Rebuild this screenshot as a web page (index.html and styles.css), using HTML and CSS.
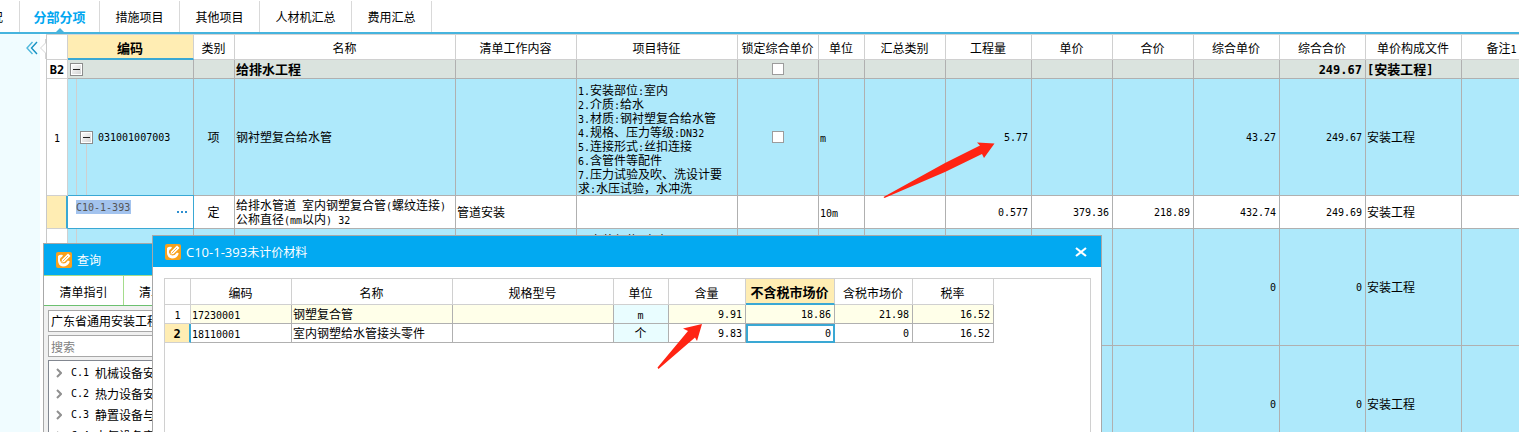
FILE: index.html
```html
<!DOCTYPE html>
<html lang="zh-CN">
<head>
    <meta charset="UTF-8">
    <meta name="viewport" content="width=device-width, initial-scale=1.0">
    <title>分部分项</title>
    <link rel="stylesheet" href="styles.css">
</head>
<body>
    <nav class="tabs">
        <a href="#" class="tab tab-cut">概况</a>
        <a href="#" class="tab active">分部分项</a>
        <a href="#" class="tab">措施项目</a>
        <a href="#" class="tab">其他项目</a>
        <a href="#" class="tab tab-wide">人材机汇总</a>
        <a href="#" class="tab">费用汇总</a>
    </nav>

    <div class="main">
        <aside class="side">
            <button class="collapse" aria-label="收起">
                <svg width="12" height="14" viewBox="0 0 12 14" fill="none" stroke-width="1.4">
                    <path d="M6.5 1 L1 7 L6.5 13" stroke="#4fb8dc"/>
                    <path d="M11 1 L5.5 7 L11 13" stroke="#1592c4"/>
                </svg>
            </button>
        </aside>
        <div class="gutter">
            <svg width="6" height="20" viewBox="0 0 6 20">
                <path d="M5.500 0 V4 L0.500 9 L5.500 14 V20" fill="#fff" stroke="#d4d4d4"/>
            </svg>
        </div>

        <div class="grid-wrap">
            <table class="grid">
                <colgroup>
                    <col class="w21"><col class="w126"><col class="w41"><col class="w221"><col class="w121">
                    <col class="w161"><col class="w81"><col class="w46"><col class="w81"><col class="w86">
                    <col class="w81"><col class="w81"><col class="w86"><col class="w86"><col class="w96"><col class="w81">
                </colgroup>
                <thead>
                    <tr>
                        <th></th>
                        <th class="current">编码</th>
                        <th>类别</th>
                        <th>名称</th>
                        <th>清单工作内容</th>
                        <th>项目特征</th>
                        <th>锁定综合单价</th>
                        <th>单位</th>
                        <th>汇总类别</th>
                        <th>工程量</th>
                        <th>单价</th>
                        <th>合价</th>
                        <th>综合单价</th>
                        <th>综合合价</th>
                        <th>单价构成文件</th>
                        <th>备注<span class="n">1</span></th>
                    </tr>
                </thead>
                <tbody>
                    <tr class="group">
                        <td class="row-no"><span class="n">B2</span></td>
                        <td class="tree"><div class="node"><button class="toggle" aria-label="折叠"></button></div></td>
                        <td></td>
                        <td>给排水工程</td>
                        <td></td>
                        <td></td>
                        <td class="mid"><input type="checkbox" aria-label="锁定综合单价"></td>
                        <td></td><td></td><td></td><td></td><td></td><td></td>
                        <td class="num">249.67</td>
                        <td><span class="n">[</span>安装工程<span class="n">]</span></td>
                        <td></td>
                    </tr>
                    <tr class="item">
                        <td class="row-no"><span class="n">1</span></td>
                        <td class="tree lines"><div class="node sub"><button class="toggle" aria-label="折叠"></button><span class="n">031001007003</span></div></td>
                        <td class="mid">项</td>
                        <td>钢衬塑复合给水管</td>
                        <td></td>
                        <td class="feature">
                            <span class="n">1.</span>安装部位<span class="n">:</span>室内<br>
                            <span class="n">2.</span>介质<span class="n">:</span>给水<br>
                            <span class="n">3.</span>材质<span class="n">:</span>钢衬塑复合给水管<br>
                            <span class="n">4.</span>规格、压力等级<span class="n">:DN32</span><br>
                            <span class="n">5.</span>连接形式<span class="n">:</span>丝扣连接<br>
                            <span class="n">6.</span>含管件等配件<br>
                            <span class="n">7.</span>压力试验及吹、洗设计要求<span class="n">:</span>水压试验，水冲洗
                        </td>
                        <td class="mid"><input type="checkbox" aria-label="锁定综合单价"></td>
                        <td><span class="n">m</span></td>
                        <td></td>
                        <td class="num">5.77</td>
                        <td></td>
                        <td></td>
                        <td class="num">43.27</td>
                        <td class="num">249.67</td>
                        <td>安装工程</td>
                        <td></td>
                    </tr>
                    <tr class="quota">
                        <td class="row-no marked"></td>
                        <td class="editing">
                            <div class="editor">
                                <input type="text" class="code-input" value="C10-1-393" aria-label="编码">
                                <button class="more" aria-label="更多"><i></i><i></i><i></i></button>
                            </div>
                        </td>
                        <td class="mid">定</td>
                        <td>给排水管道<span class="n"> </span>室内钢塑复合管<span class="n">(</span>螺纹连接<span class="n">)</span><br>公称直径<span class="n">(mm</span>以内<span class="n">) 32</span></td>
                        <td>管道安装</td>
                        <td></td>
                        <td></td>
                        <td><span class="n">10m</span></td>
                        <td></td>
                        <td class="num">0.577</td>
                        <td class="num">379.36</td>
                        <td class="num">218.89</td>
                        <td class="num">432.74</td>
                        <td class="num">249.69</td>
                        <td>安装工程</td>
                        <td></td>
                    </tr>
                    <tr class="item">
                        <td class="row-no"></td>
                        <td class="tree line"></td>
                        <td></td>
                        <td></td>
                        <td></td>
                        <td class="feature top"><span class="n">1.</span>安装部位<span class="n">:</span>室内</td>
                        <td></td><td></td><td></td><td></td><td></td><td></td>
                        <td class="num">0</td>
                        <td class="num">0</td>
                        <td>安装工程</td>
                        <td></td>
                    </tr>
                    <tr class="item">
                        <td class="row-no"></td>
                        <td class="tree line"></td>
                        <td></td><td></td><td></td><td></td><td></td><td></td><td></td><td></td><td></td><td></td>
                        <td class="num">0</td>
                        <td class="num">0</td>
                        <td>安装工程</td>
                        <td></td>
                    </tr>
                </tbody>
            </table>
        </div>
    </div>

    <!-- query window -->
    <section class="window query">
        <header class="title-bar">
            <svg class="logo" width="16" height="16" viewBox="0 0 16 16">
                <rect width="16" height="16" rx="2" fill="#f9a11b"/>
                <path d="M2 4 Q4 2 7 3 L6 5 Q3.500 6 4 8.500 Q4.500 11 7.500 11.500 Q10.500 11 12 8.500 L13.800 9.500 Q12 14.500 7 14.500 Q2.500 14 2 9 Z" fill="#fff"/>
                <path d="M5.500 10.500 L6 7.500 L12 1.500 L14.500 4 L8.500 10 Z" fill="#fff"/>
                <path d="M6.500 9.500 L12 4" stroke="#f9a11b" stroke-width="0.800"/>
            </svg>
            <span>查询</span>
        </header>
        <div class="query-tabs">
            <a href="#">清单指引</a>
            <a href="#">清单</a>
        </div>
        <div class="query-body">
            <select aria-label="定额库"><option>广东省通用安装工程</option></select>
            <input type="text" class="search" placeholder="搜索" aria-label="搜索">
            <ul class="catalog">
                <li><svg width="6" height="10" viewBox="0 0 6 10"><path d="M1 1 L5 5 L1 9"/></svg><span class="n">C.1 </span>机械设备安装工程</li>
                <li><svg width="6" height="10" viewBox="0 0 6 10"><path d="M1 1 L5 5 L1 9"/></svg><span class="n">C.2 </span>热力设备安装工程</li>
                <li><svg width="6" height="10" viewBox="0 0 6 10"><path d="M1 1 L5 5 L1 9"/></svg><span class="n">C.3 </span>静置设备与工艺</li>
                <li><svg width="6" height="10" viewBox="0 0 6 10"><path d="M1 1 L5 5 L1 9"/></svg><span class="n">C.4 </span>电气设备安装工程</li>
            </ul>
        </div>
    </section>

    <!-- unpriced material window -->
    <section class="window material">
        <header class="title-bar">
            <svg class="logo" width="16" height="16" viewBox="0 0 16 16">
                <rect width="16" height="16" rx="2" fill="#f9a11b"/>
                <path d="M2 4 Q4 2 7 3 L6 5 Q3.500 6 4 8.500 Q4.500 11 7.500 11.500 Q10.500 11 12 8.500 L13.800 9.500 Q12 14.500 7 14.500 Q2.500 14 2 9 Z" fill="#fff"/>
                <path d="M5.500 10.500 L6 7.500 L12 1.500 L14.500 4 L8.500 10 Z" fill="#fff"/>
                <path d="M6.500 9.500 L12 4" stroke="#f9a11b" stroke-width="0.800"/>
            </svg>
            <span><span class="latin">C10-1-393</span>未计价材料</span>
            <button class="close" aria-label="关闭">
                <svg width="12" height="10" viewBox="0 0 12 10"><path d="M1 1 L11 9 M11 1 L1 9" stroke="#fff" stroke-width="2.200"/></svg>
            </button>
        </header>
        <div class="material-body">
            <table class="grid small">
                <colgroup>
                    <col class="w26"><col class="w101"><col class="w161"><col class="w161"><col class="w55">
                    <col class="w77"><col class="w89"><col class="w78"><col class="w81">
                </colgroup>
                <thead>
                    <tr>
                        <th></th>
                        <th>编码</th>
                        <th>名称</th>
                        <th>规格型号</th>
                        <th>单位</th>
                        <th>含量</th>
                        <th class="current">不含税市场价</th>
                        <th>含税市场价</th>
                        <th>税率</th>
                    </tr>
                </thead>
                <tbody>
                    <tr class="pale">
                        <td class="row-no"><span class="n">1</span></td>
                        <td><span class="n">17230001</span></td>
                        <td>钢塑复合管</td>
                        <td></td>
                        <td class="unit"><span class="n">m</span></td>
                        <td class="num">9.91</td>
                        <td class="num">18.86</td>
                        <td class="num">21.98</td>
                        <td class="num">16.52</td>
                    </tr>
                    <tr>
                        <td class="row-no marked"><span class="n">2</span></td>
                        <td><span class="n">18110001</span></td>
                        <td>室内钢塑给水管接头零件</td>
                        <td></td>
                        <td class="unit">个</td>
                        <td class="num">9.83</td>
                        <td class="num focus">0</td>
                        <td class="num">0</td>
                        <td class="num">16.52</td>
                    </tr>
                </tbody>
            </table>
        </div>
    </section>

    <!-- red marker arrows -->
    <svg class="arrow arrow-qty" width="112" height="58" viewBox="0 0 112 58">
        <path d="M0.500 56 L62 22 L97 4.500 L94 1.500 L111.500 2.500 L101 17 L99 13 L62 31 L1.500 57 Z"/>
    </svg>
    <svg class="arrow arrow-content" width="46" height="46" viewBox="0 0 46 46">
        <path d="M0.500 44.500 L31 8 L26 5.500 L45 1 L40 18 L38 14.500 L1.500 46 Z"/>
    </svg>
</body>
</html>
```
FILE: styles.css
```css
* {
    box-sizing: border-box;
}

body {
    margin: 0;
    height: 100vh;
    display: flex;
    flex-direction: column;
    position: relative;
    overflow: hidden;
    background: #fff;
    color: #000;
    font-family: "Noto Sans CJK SC", sans-serif;
    font-size: 12px;
    line-height: 14px;
}

a {
    color: inherit;
    text-decoration: none;
}

button {
    padding: 0;
    border: none;
    background: none;
}

svg {
    display: block;
}

/* half-width characters */
.n,
.num,
.code-input {
    font-family: "DejaVu Sans Mono", monospace;
    font-size: 10px;
    white-space: pre;
}

.n {
    line-height: 1px;
}

/* top tabs */
.tabs {
    display: flex;
    flex: none;
    height: 34px;
    padding-top: 1px;
    border-bottom: 2px solid #46b4de;
}

.tab {
    width: 80px;
    display: flex;
    align-items: center;
    justify-content: center;
    position: relative;
    border-right: 1px solid #d9d9d9;
    white-space: nowrap;
}

.tab-cut {
    width: 20px;
    justify-content: flex-end;
    padding-right: 16px;
}

.tab-wide {
    width: 92px;
}

.tab.active {
    color: #02a7f0;
    font-size: 13px;
    font-weight: bold;
}

.tab.active::after {
    content: "";
    position: absolute;
    bottom: 0;
    border: 4px solid transparent;
    border-top: none;
    border-bottom-color: #46b4de;
}

/* main area */
.main {
    display: flex;
    flex: 1;
    min-height: 0;
}

.side {
    flex: none;
    width: 40px;
    padding: 7px 2px;
    background: #f0fcff;
}

.collapse {
    display: block;
    margin-left: auto;
}

.gutter {
    flex: none;
    width: 6px;
    padding-top: 5px;
}

.grid-wrap {
    flex: 1;
    min-width: 0;
    overflow: hidden;
    border-top: 1px solid #d4d4d4;
    border-left: 1px solid #c8c8c8;
}

/* data tables */
.grid {
    table-layout: fixed;
    width: 1496px;
    border-collapse: separate;
    border-spacing: 0;
}

.grid.small {
    width: 829px;
}

.w21 { width: 21px; }
.w26 { width: 26px; }
.w41 { width: 41px; }
.w46 { width: 46px; }
.w55 { width: 55px; }
.w77 { width: 77px; }
.w78 { width: 78px; }
.w81 { width: 81px; }
.w86 { width: 86px; }
.w89 { width: 89px; }
.w96 { width: 96px; }
.w101 { width: 101px; }
.w121 { width: 121px; }
.w126 { width: 126px; }
.w161 { width: 161px; }
.w221 { width: 221px; }

.grid th,
.grid td {
    padding: 0 2px 0 1px;
    border-right: 1px solid #b0b0b0;
    border-bottom: 1px solid #b0b0b0;
    text-align: left;
    white-space: nowrap;
}

.grid th {
    height: 25px;
    padding-top: 2px;
    border-color: #d0d0d0;
    font-weight: normal;
    text-align: center;
}

.small th {
    height: 26px;
}

.grid th.current {
    background: #ffedb3;
    border-bottom: 2px solid #3aa8d4;
    font-size: 13px;
    font-weight: bold;
}

.grid td {
    height: 19px;
}

.grid td.num {
    padding-top: 2px;
    padding-right: 3px;
    text-align: right;
}

.grid td.mid,
.grid td.unit {
    text-align: center;
}

.grid td.row-no {
    background: #fff;
    border-color: #d0d0d0;
    text-align: center;
    padding: 0;
}

.grid td.marked {
    background: #ffedb3;
    border-right: 2px solid #3aa8d4;
    font-weight: bold;
}

.marked .n {
    font-size: 12px;
}

.group td {
    background: #dae3de;
    font-size: 13px;
    font-weight: bold;
}

.group .n,
.group td.num {
    font-size: 12px;
}

.item td {
    height: 117px;
    background: #aee9fb;
}

.quota td {
    height: 33px;
}

.grid td.feature {
    padding-top: 4px;
    padding-right: 4px;
    white-space: normal;
}

.grid td.top {
    vertical-align: top;
}

/* tree column */
.node {
    display: flex;
    align-items: center;
}

.node.sub {
    gap: 5px;
    padding-left: 11px;
}

.toggle {
    width: 13px;
    height: 13px;
    margin-left: 1px;
    border: 1px solid #8c8c8c;
    background: linear-gradient(#222, #222) center / 7px 1px no-repeat, linear-gradient(135deg, #fff, #d0d0d0);
    box-shadow: inset 0 0 0 1px #fff;
}

.sub .toggle {
    margin-left: 0;
}

.item td.line {
    background: linear-gradient(#cfcfcf, #cfcfcf) 8px 0 / 1px 100% no-repeat, #aee9fb;
}

.item td.lines {
    background:
        linear-gradient(#cfcfcf, #cfcfcf) 8px 0 / 1px 100% no-repeat,
        linear-gradient(#cfcfcf, #cfcfcf) 18px 100% / 1px 50% no-repeat,
        #aee9fb;
}

.grid td.editing {
    padding: 0;
    border-color: #3aa8d4;
    box-shadow: 0 -1px 0 #3aa8d4;
}

.editor {
    display: flex;
    justify-content: space-between;
    height: 32px;
    padding: 4px 6px 0 8px;
}

.code-input {
    width: 55px;
    height: 14px;
    padding: 0;
    border: none;
    background: #a3c3ee;
    color: #555;
}

.more {
    display: flex;
    gap: 2px;
    height: 14px;
    padding-top: 11px;
}

.more i {
    width: 2px;
    height: 2px;
    background: #2e8fd0;
}

input[type="checkbox"] {
    appearance: none;
    display: block;
    width: 12px;
    height: 12px;
    margin: 0 auto;
    border: 1px solid #9c9c9c;
    background: #fff;
}

/* floating windows */
.window {
    position: absolute;
    bottom: 0;
    display: flex;
    flex-direction: column;
    border: 1px solid #a8a8a8;
    border-bottom: none;
    background: #fff;
    overflow: hidden;
}

.query {
    left: 43px;
    top: 243px;
    width: 300px;
}

.material {
    left: 152px;
    top: 235px;
    width: 950px;
}

.title-bar {
    display: flex;
    align-items: center;
    flex: none;
    gap: 5px;
    height: 31px;
    padding: 0 14px 0 12px;
    background: #02a9f1;
    color: #fff;
}

.latin {
    font-family: "Open Sans", sans-serif;
    font-size: 13px;
}

.close {
    margin-left: auto;
}

.material-body {
    flex: 1;
    margin: 11px 10px 0 11px;
    border: 1px solid #d0d0d0;
    border-bottom: none;
}

.pale td {
    background: #ffffe9;
}

.grid td.unit {
    background: #e9fdff;
}

.grid td.focus {
    border: 2px solid #3aa8d4;
    padding-top: 0;
    padding-right: 2px;
}

.query-tabs {
    display: flex;
    flex: none;
    height: 31px;
    border-top: 1px solid #a5dc8c;
    border-bottom: 1px solid #6cc070;
}

.query-tabs a {
    width: 80px;
    padding-top: 9px;
    border-right: 1px solid #a5dc8c;
    text-align: center;
}

.query-tabs a + a {
    text-align: left;
    padding-left: 15px;
}

.query-body {
    display: flex;
    flex-direction: column;
    flex: 1;
    gap: 3px;
    padding: 4px;
    background: #f0f0f0;
}

.query-body select,
.search {
    flex: none;
    height: 22px;
    padding: 0 2px;
    appearance: none;
    border: 1px solid #a8a8a8;
    border-radius: 0;
    background: #fff;
    color: #000;
    font: inherit;
}

.search::placeholder {
    color: #808080;
}

.catalog {
    flex: 1;
    margin: 0;
    padding: 1px 0 0 7px;
    border: 1px solid #828790;
    background: #fff;
    list-style: none;
}

.catalog li {
    display: flex;
    align-items: center;
    height: 21px;
    white-space: nowrap;
}

.catalog svg {
    margin-right: 9px;
    fill: none;
    stroke: #909090;
    stroke-width: 2;
}

/* marker arrows lie over the tables */
.arrow {
    position: absolute;
    fill: #ff2413;
    pointer-events: none;
}

.arrow-qty {
    left: 883px;
    top: 141px;
}

.arrow-content {
    left: 657px;
    top: 323px;
}
```
